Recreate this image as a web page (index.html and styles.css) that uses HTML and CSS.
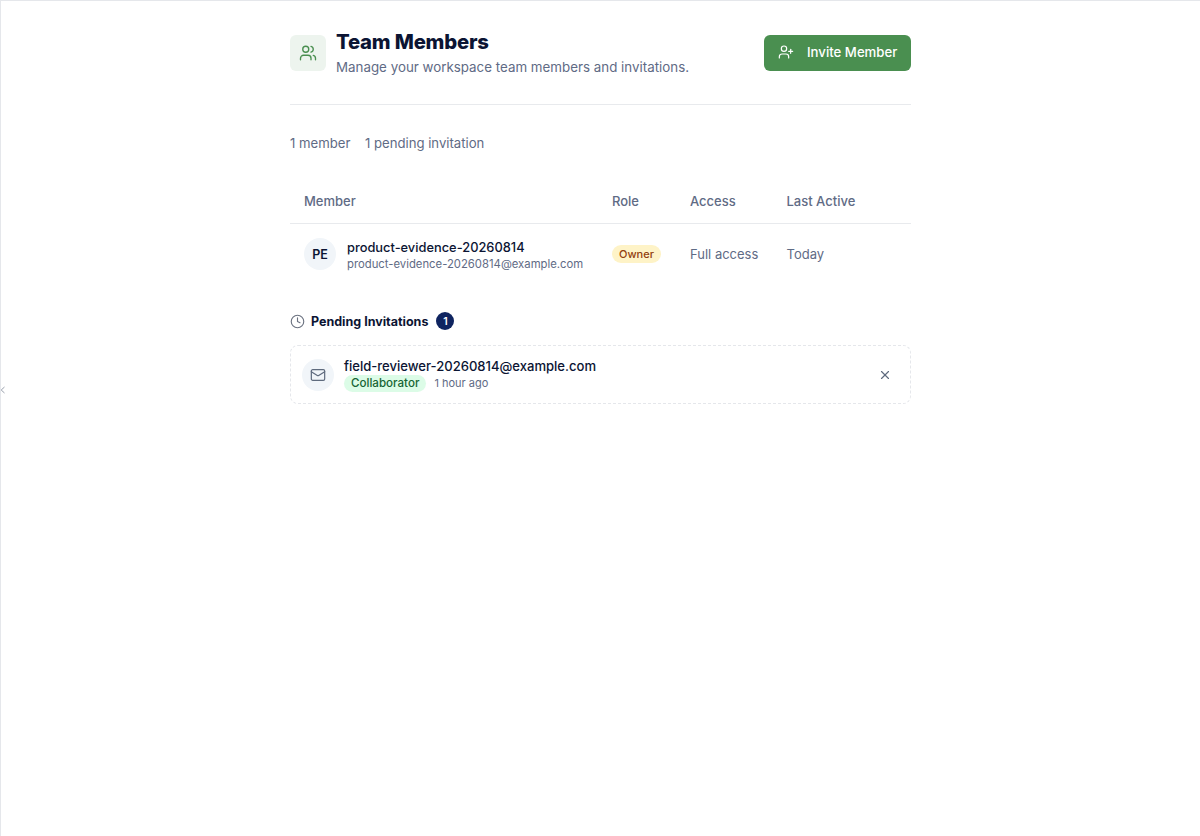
FILE: index.html
```html
<!DOCTYPE html>
<html lang="en">
<head>
<meta charset="utf-8">
<title>Team Members</title>
<link rel="stylesheet" href="styles.css">
</head>
<body>
<div class="frame">
  <span class="collapse"><svg width="6" height="8" viewBox="0 0 6 8" fill="none"><path d="M4.5 1 1.2 4l3.3 3" stroke="#9aa1ad" stroke-width="1"/></svg></span>
  <main class="page">
    <header class="head">
      <div class="head-left">
        <div class="head-icon">
          <svg width="18" height="18" viewBox="0 0 24 24" fill="none" stroke="#4a8f50" stroke-width="1.8" stroke-linecap="round" stroke-linejoin="round"><path d="M16 21v-2a4 4 0 0 0-4-4H6a4 4 0 0 0-4 4v2"/><circle cx="9" cy="7" r="4"/><path d="M22 21v-2a4 4 0 0 0-3-3.87"/><path d="M16 3.13a4 4 0 0 1 0 7.75"/></svg>
        </div>
        <div>
          <h1 class="title">Team Members</h1>
          <p class="sub">Manage your workspace team members and invitations.</p>
        </div>
      </div>
      <button class="invite">
        <svg width="16" height="16" viewBox="0 0 24 24" fill="none" stroke="#fff" stroke-width="1.8" stroke-linecap="round" stroke-linejoin="round"><path d="M16 21v-2a4 4 0 0 0-4-4H6a4 4 0 0 0-4 4v2"/><circle cx="9" cy="7" r="4"/><path d="M19 8v6"/><path d="M22 11h-6"/></svg>
        <span>Invite Member</span>
      </button>
    </header>

    <div class="counts"><span>1 member</span><span>1 pending invitation</span></div>

    <div class="table">
      <div class="row row-head">
        <div>Member</div><div>Role</div><div>Access</div><div>Last Active</div>
      </div>
      <div class="row row-body">
        <div class="member">
          <div class="avatar">PE</div>
          <div class="member-text">
            <div class="member-name">product-evidence-20260814</div>
            <div class="member-mail">product-evidence-20260814@example.com</div>
          </div>
        </div>
        <div class="role"><span class="owner">Owner</span></div>
        <div class="cell">Full access</div>
        <div class="cell">Today</div>
      </div>
    </div>

    <section class="pending">
      <div class="pending-head">
        <svg width="15" height="15" viewBox="0 0 24 24" fill="none" stroke="#6b7280" stroke-width="1.8" stroke-linecap="round" stroke-linejoin="round"><circle cx="12" cy="12" r="10"/><path d="M12 6v6l4 2"/></svg>
        <h2 class="pending-title">Pending Invitations</h2>
        <span class="count-badge">1</span>
      </div>
      <div class="invite-card">
        <div class="mail-icon">
          <svg width="16" height="16" viewBox="0 0 24 24" fill="none" stroke="#5f6b7e" stroke-width="1.8" stroke-linecap="round" stroke-linejoin="round"><rect x="2" y="4" width="20" height="16" rx="2"/><path d="m22 7-8.97 5.7a1.94 1.94 0 0 1-2.06 0L2 7"/></svg>
        </div>
        <div class="invite-text">
          <div class="invite-mail">field-reviewer-20260814@example.com</div>
          <div class="invite-meta"><span class="collab">Collaborator</span><span class="ago">1 hour ago</span></div>
        </div>
        <button class="close" aria-label="Cancel invitation">
          <svg width="14" height="14" viewBox="0 0 24 24" fill="none" stroke="#5f6b7e" stroke-width="2" stroke-linecap="round" stroke-linejoin="round"><path d="M18 6 6 18"/><path d="m6 6 12 12"/></svg>
        </button>
      </div>
    </section>
  </main>
</div>
</body>
</html>
```
FILE: styles.css
```css
* { box-sizing: border-box; }
html, body { margin: 0; height: 100%; background: #fff; }
body { font-family: "Inter", "Noto Sans", sans-serif; color: #0b1433; }
.frame { position: relative; height: 836px; border-top: 1px solid #e5e7eb; border-left: 1px solid #e5e7eb; overflow: hidden; }
.collapse { position: absolute; left: -1px; top: 385px; line-height: 0; }
.page { width: 621px; margin-left: 289px; padding-top: 34px; }
.head { display: flex; justify-content: space-between; align-items: flex-start; height: 70px; border-bottom: 1px solid #e8eaed; }
.head-left { display: flex; gap: 10.5px; }
.head-icon { width: 35.5px; height: 35.5px; border-radius: 6px; background: #edf4ee; display: flex; align-items: center; justify-content: center; }
.title { margin: -7px 0 0; font-size: 20.3px; line-height: 28px; font-weight: 800; color: #0b1433; letter-spacing: -0.2px; }
.sub { margin: 2px 0 0; font-size: 13.35px; line-height: 18px; color: #5f6b85; }
.invite { width: 147px; height: 35.5px; border: 0; border-radius: 6px; background: #4a8f50; color: #fff; font: 500 13.2px "Inter", sans-serif; display: flex; align-items: center; gap: 13px; padding: 0 0 1px 14px; }
.counts { display: flex; gap: 14.5px; margin-top: 29px; font-size: 13.15px; line-height: 18px; color: #5f6b85; }
.table { margin-top: 26px; }
.row { display: grid; grid-template-columns: 308px 78px 96.5px 1fr; padding-left: 14px; }
.row-head { height: 46px; align-items: center; font-size: 13px; font-weight: 500; color: #5f6b85; border-bottom: 1px solid #e8eaed; }
.row-body { height: 60px; align-items: center; }
.member { display: flex; align-items: center; gap: 11px; }
.member-text { padding-top: 3px; }
.avatar { width: 32px; height: 32px; border-radius: 50%; background: #f1f5f9; display: flex; align-items: center; justify-content: center; font-size: 12.5px; font-weight: 600; color: #0b1433; }
.member-name { font-size: 12.85px; line-height: 16px; font-weight: 500; color: #0b1433; }
.member-mail { font-size: 11.3px; line-height: 16px; color: #5f6b85; }
.role { display: flex; padding-bottom: 1px; }
.owner { height: 18px; line-height: 18px; padding: 0 7px; border-radius: 10px; background: #fef3c7; color: #92400e; font-size: 11px; font-weight: 500; }
.cell { font-size: 13px; color: #5f6b85; }
.pending { margin-top: 27px; }
.pending-head { display: flex; align-items: center; height: 20px; }
.pending-title { margin: 0 0 0 6px; font-size: 12.5px; font-weight: 700; color: #0b1433; }
.count-badge { margin-left: 8px; width: 18px; height: 18px; border-radius: 50%; background: #0f2460; color: #fff; font-size: 10.5px; font-weight: 600; display: flex; align-items: center; justify-content: center; }
.invite-card { margin-top: 14px; height: 59px; border: 1px dashed #e5e7eb; border-radius: 8px; display: flex; align-items: center; padding: 0 18px 0 11px; }
.mail-icon { width: 32px; height: 32px; border-radius: 50%; background: #f1f5f9; display: flex; align-items: center; justify-content: center; padding-right: 1px; }
.invite-text { margin-left: 10px; flex: 1; }
.invite-mail { font-size: 13.05px; line-height: 17px; font-weight: 500; color: #0b1433; }
.invite-meta { display: flex; align-items: center; gap: 8px; }
.collab { height: 17px; line-height: 17px; padding: 0 7px; border-radius: 9px; background: #dcfce7; color: #166534; font-size: 11.6px; font-weight: 500; }
.ago { font-size: 11px; color: #5f6b85; }
.close { width: 14px; height: 14px; padding: 0; border: 0; background: none; line-height: 0; }
```
